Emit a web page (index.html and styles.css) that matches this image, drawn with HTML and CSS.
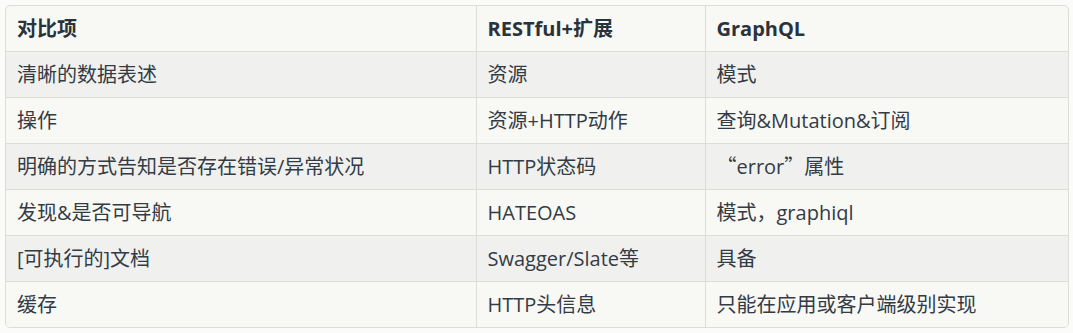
FILE: index.html
```html
<!DOCTYPE html>
<html lang="zh-CN">
<head>
<meta charset="utf-8">
<link rel="stylesheet" href="styles.css">
</head>
<body>
<div class="wrap">
<table class="cmp">
  <colgroup><col class="c1"><col class="c2"><col class="c3"></colgroup>
  <thead>
    <tr><th>对比项</th><th>RESTful+扩展</th><th>GraphQL</th></tr>
  </thead>
  <tbody>
    <tr><td>清晰的数据表述</td><td>资源</td><td>模式</td></tr>
    <tr><td>操作</td><td>资源+HTTP动作</td><td>查询&amp;Mutation&amp;订阅</td></tr>
    <tr><td>明确的方式告知是否存在错误/异常状况</td><td>HTTP状态码</td><td><span class="cjk">“</span>error<span class="cjk">”</span>属性</td></tr>
    <tr><td>发现&amp;是否可导航</td><td>HATEOAS</td><td>模式，graphiql</td></tr>
    <tr><td>[可执行的]文档</td><td>Swagger/Slate等</td><td>具备</td></tr>
    <tr><td>缓存</td><td>HTTP头信息</td><td>只能在应用或客户端级别实现</td></tr>
  </tbody>
</table>
</div>
</body>
</html>
```
FILE: styles.css
```css
html, body {
  margin: 0;
  padding: 0;
  background: #fbfbf9;
}
body {
  padding: 5px 6px 0 5px;
  font-family: "Open Sans", "Noto Sans CJK SC", sans-serif;
  font-size: 20px;
  color: #333b44;
}
.cjk {
  font-family: "Noto Sans CJK SC", sans-serif;
}
.wrap {
  width: 1062px;
  border: 1px solid #dcdcd8;
  border-radius: 5px;
  overflow: hidden;
  background: #f8f8f5;
}
.cmp {
  width: 100%;
  border-collapse: collapse;
  table-layout: fixed;
}
.c1 { width: 470px; }
.c2 { width: 229px; }
.c3 { width: auto; }
.cmp th, .cmp td {
  height: 45px;
  padding: 0 11px;
  text-align: left;
  vertical-align: middle;
  border-left: 1px solid #dcdcd8;
  border-top: 1px solid #dcdcd8;
  white-space: nowrap;
  line-height: 24px;
}
.cmp th:first-child, .cmp td:first-child { border-left: none; }
.cmp thead th {
  border-top: none;
  font-weight: 700;
  color: #2a323b;
}
.cmp tbody tr:nth-child(odd) { background: #f0f1ef; }
.cmp tbody tr:nth-child(even) { background: #f8f8f5; }
```
